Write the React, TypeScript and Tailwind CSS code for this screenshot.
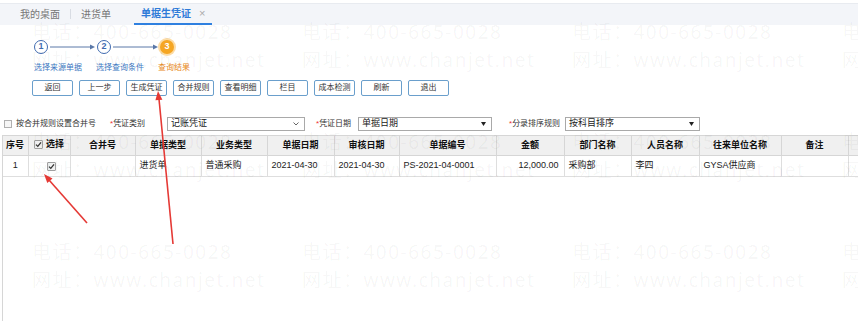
const steps = [
  { n: 1, label: "选择来源单据" },
  { n: 2, label: "选择查询条件" },
  { n: 3, label: "查询结果", active: true },
];

const buttons = ["返回", "上一步", "生成凭证", "合并规则", "查看明细", "栏目", "成本检测", "刷新", "退出"];

const cols = [
  { title: "序号", w: 25 },
  { title: "选择", w: 42, check: true },
  { title: "合并号", w: 65 },
  { title: "单据类型", w: 66 },
  { title: "业务类型", w: 66 },
  { title: "单据日期", w: 67 },
  { title: "审核日期", w: 65 },
  { title: "单据编号", w: 97 },
  { title: "金额", w: 68 },
  { title: "部门名称", w: 67 },
  { title: "人员名称", w: 68 },
  { title: "往来单位名称", w: 82 },
  { title: "备注", w: 67 },
  { title: "", w: 40 },
];

const row = ["1", "", "", "进货单", "普通采购", "2021-04-30", "2021-04-30", "PS-2021-04-0001", "12,000.00", "采购部", "李四", "GYSA供应商", "", ""];

function Check({ checked }: { checked?: boolean }) {
  return (
    <span className="inline-flex items-center justify-center w-[9px] h-[9px] border border-[#a0a0a0] bg-[#f1f1f1] rounded-[1px] align-middle">
      {checked && (
        <svg width="7" height="7" viewBox="0 0 7 7">
          <path d="M1 3.6 L2.8 5.4 L6 1.4" stroke="#333" strokeWidth="1.3" fill="none" />
        </svg>
      )}
    </span>
  );
}

function Select({ value, w, chevron }: { value: string; w: string; chevron?: boolean }) {
  return (
    <div className={`${w} h-[14px] border border-[#a9a9a9] bg-white flex items-center justify-between pl-[3px] pr-[5px] text-[9px] text-[#222]`}>
      <span>{value}</span>
      {chevron ? (
        <svg width="6" height="4" viewBox="0 0 6 4">
          <path d="M0.5 0.5 L3 3 L5.5 0.5" stroke="#555" strokeWidth="0.9" fill="none" />
        </svg>
      ) : (
        <svg width="5" height="4" viewBox="0 0 5 4">
          <path d="M0 0 H5 L2.5 4 Z" fill="#222" />
        </svg>
      )}
    </div>
  );
}

function StepArrow() {
  return (
    <svg width="47" height="8" viewBox="0 0 47 8" className="mx-[1px]">
      <line x1="1" y1="4" x2="42" y2="4" stroke="#5a78a8" strokeWidth="1" />
      <path d="M41 1.5 L46 4 L41 6.5 Z" fill="#5a78a8" />
    </svg>
  );
}

export default function App() {
  return (
    <div className="relative w-[858px] h-[321px] overflow-hidden bg-white font-['Liberation_Sans','Noto_Sans_CJK_SC',sans-serif] text-[#333]">
      {/* tabs */}
      <div className="mt-[3px] h-[22px] bg-[#f3f5f9] border-t border-[#e8ebf0] flex items-end pl-[20px] text-[10px]">
        <div className="h-full flex items-center text-[#777]">我的桌面</div>
        <div className="h-[10px] w-px bg-[#d8dce3] mx-[10px] mb-[6px]" />
        <div className="h-full flex items-center text-[#777]">进货单</div>
        <div className="ml-[23px] h-full flex items-center gap-[8px] px-[7px] border-b-[2px] border-[#2f80e0]">
          <span className="text-[#2f7bd8] font-bold">单据生凭证</span>
          <span className="text-[#aaa] text-[11px] leading-none">×</span>
        </div>
      </div>

      {/* stepper */}
      <div className="pl-[34px] pt-[15px]">
        <div className="flex items-center h-[14px]">
          {steps.map((s, i) => (
            <div key={s.n} className="flex items-center">
              {s.active ? (
                <div className="w-[14px] h-[14px] rounded-full bg-[#f5a623] ring-2 ring-[#fcdca6] text-white text-[9px] font-bold flex items-center justify-center">
                  {s.n}
                </div>
              ) : (
                <div className="w-[14px] h-[14px] rounded-full border-[1.5px] border-[#3f6bb0] text-[#3f6bb0] text-[9px] font-bold flex items-center justify-center">
                  {s.n}
                </div>
              )}
              {i < steps.length - 1 && <StepArrow />}
            </div>
          ))}
        </div>
        <div className="flex mt-[9px] text-[8px] leading-[10px]">
          {steps.map((s) => (
            <div key={s.n} className={`w-[62px] ${s.active ? "text-[#e8891c]" : "text-[#3d78c2]"}`}>
              {s.label}
            </div>
          ))}
        </div>
      </div>

      {/* buttons */}
      <div className="flex gap-[6px] pl-[32px] mt-[7px]">
        {buttons.map((b) => (
          <div
            key={b}
            className="w-[41px] h-[16px] border border-[#6a9fcc] rounded-[2px] bg-white flex items-center justify-center text-[8px] text-[#333]"
          >
            {b}
          </div>
        ))}
      </div>

      {/* filters */}
      <div className="flex items-center h-[14px] mt-[21px] text-[8px] text-[#333]">
        <span className="ml-[4px] w-[8px] h-[8px] border border-[#b0b0b0] bg-[#f6f6f6]" />
        <span className="ml-[4px] w-[94px]">按合并规则设置合并号</span>
        <span className="w-[57px]">
          <span className="text-[#e33]">*</span>凭证类别
        </span>
        <Select value="记账凭证" w="w-[138px]" chevron />
        <span className="ml-[11px] w-[42px]">
          <span className="text-[#e33]">*</span>凭证日期
        </span>
        <Select value="单据日期" w="w-[134px]" />
        <span className="ml-[17px] w-[56px]">
          <span className="text-[#e33]">*</span>分录排序规则
        </span>
        <Select value="按科目排序" w="w-[135px]" />
      </div>

      {/* table */}
      <div className="mt-[4px] ml-[2px] h-[200px] border-l border-[#d6d6d6]">
        <table className="table-fixed border-collapse text-[9px] w-[885px] min-w-[885px]">
          <colgroup>
            {cols.map((c, i) => (
              <col key={i} style={{ width: c.w }} />
            ))}
          </colgroup>
          <thead>
            <tr className="h-[20px] bg-[#f0f0f0]">
              {cols.map((c, i) => (
                <th
                  key={i}
                  className={`border border-[#d6d6d6] border-l-0 font-bold text-[#111] ${i === 0 ? "text-left pl-[3px]" : "text-center"}`}
                >
                  {c.check ? (
                    <span className="inline-flex items-center gap-[3px]">
                      <Check checked />
                      {c.title}
                    </span>
                  ) : (
                    c.title
                  )}
                </th>
              ))}
            </tr>
          </thead>
          <tbody>
            <tr className="h-[21px]">
              {row.map((v, i) => (
                <td
                  key={i}
                  className={`border border-[#dedede] border-l-0 text-[#222] ${
                    i === 0 ? "text-center" : i === 8 ? "text-right pr-[5px]" : "text-left pl-[4px]"
                  }`}
                >
                  {i === 1 ? (
                    <div className="flex justify-center">
                      <Check checked />
                    </div>
                  ) : (
                    v
                  )}
                </td>
              ))}
            </tr>
          </tbody>
        </table>
      </div>

      {/* watermark */}
      <div className="pointer-events-none absolute inset-0 pl-[32px] pt-[18px] grid grid-cols-[repeat(4,270px)] auto-rows-[110px] font-['Noto_Sans','Noto_Sans_CJK_SC',sans-serif] text-black/[0.045] text-[19px] leading-[28px] tracking-[1.5px] whitespace-nowrap">
        {Array.from({ length: 12 }).map((_, i) => (
          <div key={i}>
            <div>电话：400-665-0028</div>
            <div>网址：www.chanjet.net</div>
          </div>
        ))}
      </div>

      {/* red annotation arrows */}
      <svg className="pointer-events-none absolute inset-0" width="858" height="321" viewBox="0 0 858 321">
        <line x1="87" y1="223" x2="49" y2="180" stroke="#e53935" strokeWidth="1.6" />
        <polygon points="44,174 52.5,178.5 47.3,183.1" fill="#e53935" />
        <line x1="173" y1="244" x2="159" y2="99" stroke="#e53935" strokeWidth="1.6" />
        <polygon points="158,91 162.4,99.7 155.4,100.3" fill="#e53935" />
      </svg>
    </div>
  );
}
